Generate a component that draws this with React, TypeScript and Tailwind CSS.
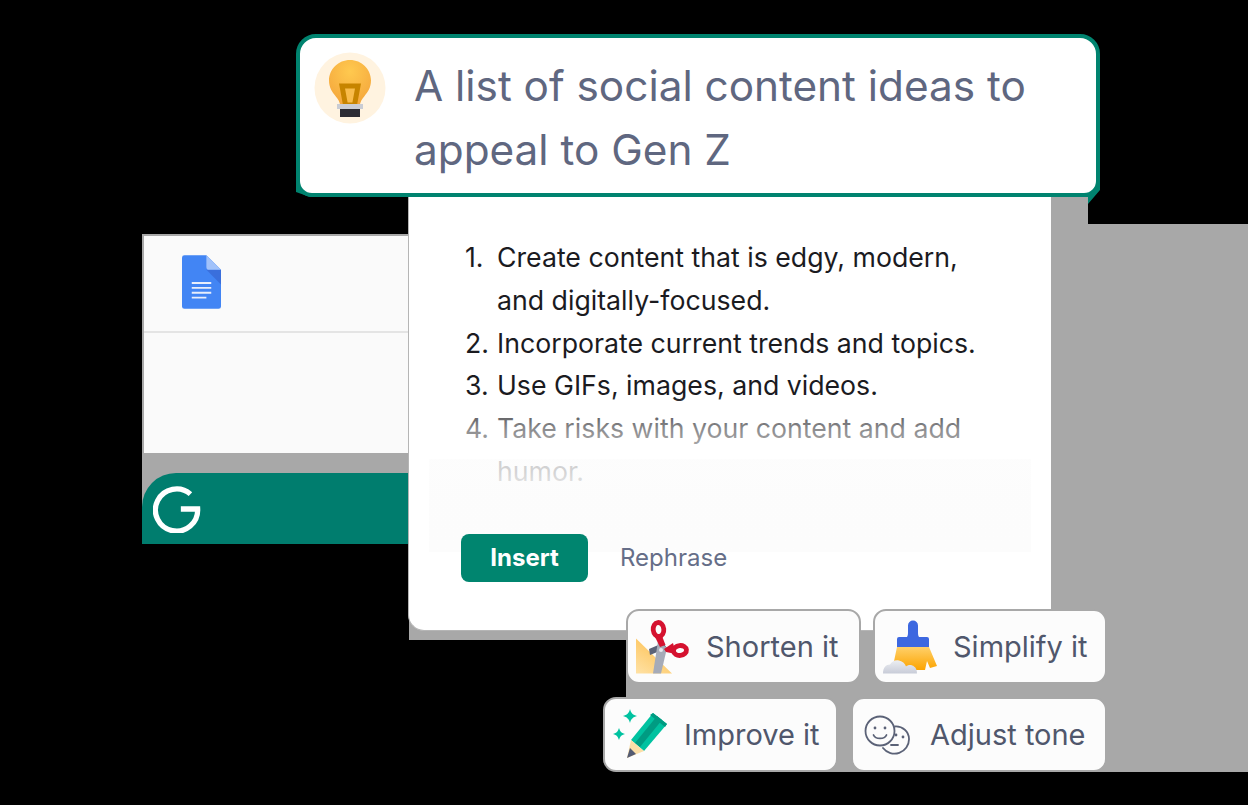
const listItems = [
  "Create content that is edgy, modern, and digitally-focused.",
  "Incorporate current trends and topics.",
  "Use GIFs, images, and videos.",
  "Take risks with your content and add humor.",
];

function BulbIcon() {
  return (
    <svg width="72" height="72" viewBox="0 0 72 72" className="shrink-0">
      <defs>
        <radialGradient id="bulb" cx="50%" cy="25%" r="75%">
          <stop offset="0%" stopColor="#ffc94f" />
          <stop offset="100%" stopColor="#f4a63c" />
        </radialGradient>
      </defs>
      <circle cx="36" cy="36" r="35.5" fill="#fff3e0" />
      <path d="M36 8C24.4 8 15 17.200 15 28.600c0 7 3.200 11.600 6.600 15.600 2.600 3 4.400 5.600 4.600 9.800h19.600c.2-4.200 2-6.800 4.600-9.800 3.400-4 6.600-8.600 6.600-15.600C57 17.200 47.600 8 36 8z" fill="url(#bulb)" />
      <path d="M28 34h16l-3.500 19h-9z" fill="#f9bc4c" stroke="#c78400" strokeWidth="5" />
      <rect x="23" y="52" width="26" height="5" fill="#c9ccd4" />
      <rect x="26" y="57" width="20" height="8" fill="#2c2c34" />
    </svg>
  );
}

function DocIcon() {
  return (
    <svg width="39" height="54" viewBox="0 0 40 55">
      <path d="M2.500 0H25l15 15v37.500a2.500 2.500 0 0 1-2.500 2.500h-35A2.500 2.500 0 0 1 0 52.500v-50A2.500 2.500 0 0 1 2.500 0z" fill="#4285f4" />
      <path d="M25 15l15 15V15z" fill="#3a6fdc" />
      <path d="M25 0l15 15H28a3 3 0 0 1-3-3z" fill="#a1c2fa" />
      <path d="M10 27.500h20v2H10zM10 32.500h20v2H10zM10 37.500h20v2H10zM10 42.500h15v2H10z" fill="#e8eefb" />
    </svg>
  );
}

function ScissorsIcon() {
  return (
    <svg width="56" height="56" viewBox="0 0 56 56" className="shrink-0">
      <defs>
        <linearGradient id="tri" x1="0" y1="1" x2="0.700" y2="0">
          <stop offset="0%" stopColor="#ffe2a6" />
          <stop offset="100%" stopColor="#fdbf4e" />
        </linearGradient>
      </defs>
      <path d="M0 19.500l36 35H0z" fill="url(#tri)" />
      <path d="M27 24L13 30l1 6 17-7z" fill="#5b6277" />
      <path d="M22 22l9 7-6 25.500h-8z" fill="#a6abb8" />
      <ellipse cx="22.500" cy="10.500" rx="5.300" ry="7" fill="none" stroke="#d5122f" strokeWidth="4.800" transform="rotate(-6 22.500 10.500)" />
      <path d="M19 18l7-1 3.500 9-5.500 2z" fill="#d5122f" />
      <path d="M28 30l9-6 3 11-10-2z" fill="#d5122f" />
      <ellipse cx="44" cy="31.500" rx="6.500" ry="5" fill="none" stroke="#d5122f" strokeWidth="4.800" transform="rotate(-6 44 31.500)" />
      <circle cx="25" cy="31" r="2" fill="#e6e8ee" />
    </svg>
  );
}

function BrushIcon() {
  return (
    <svg width="56" height="56" viewBox="0 0 56 56" className="shrink-0">
      <defs>
        <linearGradient id="bristle" x1="0" y1="0" x2="0" y2="1">
          <stop offset="0%" stopColor="#ffd06a" />
          <stop offset="100%" stopColor="#fca400" />
        </linearGradient>
        <linearGradient id="cloud" x1="0" y1="0" x2="0" y2="1">
          <stop offset="0%" stopColor="#eceef2" />
          <stop offset="100%" stopColor="#c8ccd8" />
        </linearGradient>
      </defs>
      <path d="M14 28h32l8 19-7 2-3-7-2 9H26l-16-4z" fill="url(#bristle)" />
      <path d="M25 6.500a5 5 0 0 1 10 0V14c0 2 .5 3 1 4h8a2 2 0 0 1 2 2v8H14v-8a2 2 0 0 1 2-2h8c.5-1 1-2 1-4z" fill="#3d68e0" />
      <path d="M0 54.500c0-6 3-9 7-9 2-3 5-5 9-4 4 1 6 3 7 6 2-2 6-2 8 0 2 1 3 4 3 7z" fill="url(#cloud)" />
    </svg>
  );
}

function PencilIcon() {
  return (
    <svg width="56" height="48" viewBox="0 0 56 48" className="shrink-0 overflow-visible">
      <path d="M17 -2c1 4 3 6 7 7-4 1-6 3-7 7-1-4-3-6-7-7 4-1 6-3 7-7zM6 17c1 3 2 5 6 6-4 1-5 3-6 6-1-3-2-5-6-6 4-1 5-3 6-6z" fill="#00c2a0" />
      <path d="M40 2l14 11-23 27-13-11z" fill="#00c2a0" />
      <path d="M44 5l5 4-22 27-5-4z" fill="#009b82" />
      <path d="M40 2l14 11-2 3-15-12z" fill="#009b82" />
      <path d="M18 29l13 11-17 7z" fill="#fbdfa8" />
      <path d="M14 47l3-10 6 6z" fill="#545b72" />
    </svg>
  );
}

function FacesIcon() {
  return (
    <svg width="46" height="40" viewBox="0 0 46 40" fill="none" stroke="#5b6277" strokeWidth="1.800" strokeLinecap="round" className="shrink-0">
      <circle cx="16" cy="16" r="14.500" />
      <circle cx="11" cy="13" r="1.400" fill="#5b6277" stroke="none" />
      <circle cx="21" cy="13" r="1.400" fill="#5b6277" stroke="none" />
      <path d="M9.500 20c2 4.500 11 4.500 13 0" />
      <path d="M31 11.500c7.500-.500 14 5 14 12.500a14.500 14.500 0 0 1-26 9" />
      <circle cx="32" cy="20" r="1.400" fill="#5b6277" stroke="none" />
      <circle cx="39" cy="22" r="1.400" fill="#5b6277" stroke="none" />
      <path d="M27 30h7" />
    </svg>
  );
}

function GrammarlyG() {
  return (
    <svg width="48" height="48" viewBox="0 0 50 50" fill="none" stroke="#fff" strokeWidth="5.500">
      <path d="M39 9.500A22 22 0 1 0 46.500 25H29" />
    </svg>
  );
}

function Chip({ icon, label, className }: { icon: React.ReactNode; label: string; className: string }) {
  return (
    <div className={`flex items-center bg-[#fcfcfc] border-2 border-[#a8a8a8] rounded-[13px] h-[75px] text-[29px] text-[#50576c] ${className}`}>
      {icon}
      <span>{label}</span>
    </div>
  );
}

export default function App() {
  return (
    <div className="relative w-[1248px] h-[805px] overflow-hidden bg-black font-['Inter',sans-serif]">
      {/* gray backdrop, one stepped shape behind the cards */}
      <div className="absolute inset-0 bg-[#a8a8a8] [clip-path:polygon(1040px_190px,1088px_190px,1088px_224px,1248px_224px,1248px_772px,626px_772px,626px_640px,409px_640px,409px_600px,1040px_600px)]" />

      {/* docs window behind */}
      <div className="absolute left-[142px] top-[234px] w-[280px] h-[310px] flex flex-col bg-[#a8a8a8] pl-[2px] pt-[2px]">
        <div className="flex items-start h-[97px] bg-[#fafafa] border-b-2 border-[#e4e4e4] pl-[38px] pt-[19px]">
          <DocIcon />
        </div>
        <div className="h-[120px] bg-[#fafafa]" />
        <div className="h-[20px] shrink-0" />
        <div className="flex-1 -ml-[2px] flex items-center bg-[#007d6e] rounded-tl-[34px] pl-[11px]">
          <GrammarlyG />
        </div>
      </div>

      {/* result card */}
      <div className="absolute left-[408px] top-[180px] w-[643px] h-[451px] flex flex-col bg-white border-l border-b border-[#b5b5b5] rounded-b-[16px] text-[26.7px] text-[#1b1b1f]">
        <ol className="flex flex-col pl-[56px] pr-[60px] pt-[56px] leading-[42.8px]">
          {listItems.map((item, i) => (
            <li key={item} className="flex">
              <span className="w-[32px] shrink-0">{i + 1}.</span>
              <span className="max-w-[500px]">{item}</span>
            </li>
          ))}
        </ol>
        <div className="absolute left-[20px] top-[215px] w-[602px] h-[157px] bg-[linear-gradient(to_bottom,rgba(255,255,255,0)_0%,rgba(255,255,255,0.5)_22%,rgba(255,255,255,0.7)_41%,rgba(252,252,252,0.8)_41%,rgba(252,252,252,0.82)_49%,rgba(252,252,252,0.95)_65%,#fcfcfc_100%)]" />
        <div className="relative flex items-center gap-[32px] pl-[52px] mt-[41px] text-[24px]">
          <button className="w-[127px] h-[48px] rounded-[8px] bg-[#00856f] text-white font-bold">Insert</button>
          <span className="text-[#666e88]">Rephrase</span>
        </div>
      </div>

      {/* teal lip under the prompt card, cut at both lower corners */}
      <div className="absolute inset-0 bg-[#00836f] [clip-path:polygon(296px_180px,1100px_180px,1100px_190px,1088px_204px,1088px_197px,310px_197px,296px_192px)]" />

      {/* prompt card */}
      <div className="absolute left-[296px] top-[34px] w-[804px] h-[163px] flex items-start gap-[28px] bg-white border-4 border-[#00836f] rounded-t-[20px] rounded-b-[16px] pl-[14px] pt-[14px] text-[42.3px] leading-[64px] text-[#5f6780]">
        <BulbIcon />
        <p className="w-[650px] mt-[2px]">A list of social content ideas to appeal to Gen Z</p>
      </div>

      {/* action chips */}
      <div className="absolute left-[603px] top-[609px] w-[645px] flex flex-col gap-[13px] pr-[141px]">
        <div className="flex justify-end gap-[12px]">
          <Chip className="w-[235px] gap-[14px] pl-[8px]" icon={<ScissorsIcon />} label="Shorten it" />
          <Chip className="w-[234px] gap-[14px] pl-[8px]" icon={<BrushIcon />} label="Simplify it" />
        </div>
        <div className="flex justify-end gap-[13px]">
          <Chip className="w-[235px] gap-[15px] pl-[8px]" icon={<PencilIcon />} label="Improve it" />
          <Chip className="w-[256px] gap-[20px] pl-[11px]" icon={<FacesIcon />} label="Adjust tone" />
        </div>
      </div>
    </div>
  );
}
